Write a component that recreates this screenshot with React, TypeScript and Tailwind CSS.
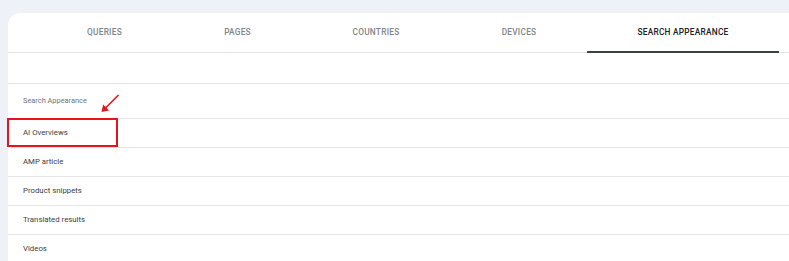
import React from "react";

const tabs = [
  { label: "QUERIES", w: "w-[139px]" },
  { label: "PAGES", w: "w-[127px]" },
  { label: "COUNTRIES", w: "w-[150px]" },
  { label: "DEVICES", w: "w-[136px]" },
  { label: "SEARCH APPEARANCE", w: "w-[192px]", active: true },
];

const rows = ["AI Overviews", "AMP article", "Product snippets", "Translated results", "Videos"];

const App = () => {
  return (
    <div className="relative w-[789px] h-[261px] overflow-hidden bg-[#eef2f8] pl-2 pt-[13px] font-['Roboto','Liberation_Sans',sans-serif]">
      <div className="bg-white rounded-tl-[12px] h-full">
        {/* tabs */}
        <div className="flex h-[40px] border-b border-[#e6e6e6] pl-[27px]">
          {tabs.map((t) => (
            <div
              key={t.label}
              className={`${t.w} relative flex items-center justify-center text-[8.3px] font-medium tracking-[0.03em] ${
                t.active ? "text-[#202124]" : "text-[#80868b]"
              }`}
            >
              <span className="-mt-[1px]">{t.label}</span>
              {t.active ? (
                <div className="absolute left-0 right-0 -bottom-[1px] h-[2px] bg-[#3c4043]" />
              ) : null}
            </div>
          ))}
        </div>
        <div className="h-[31px] border-b border-[#e6e6e6]" />
        <div className="h-[35px] border-b border-[#e6e6e6] flex items-center pl-[15px] text-[7.4px] text-[#70757a]">
          Search Appearance
        </div>
        {rows.map((r) => (
          <div
            key={r}
            className="h-[29px] border-b border-[#e6e6e6] flex items-center pl-[15px] text-[7.8px] text-[#3c4043]"
          >
            {r}
          </div>
        ))}
      </div>

      {/* annotation */}
      <div className="absolute left-[7px] top-[118px] w-[111px] h-[29px] border-2 border-[#e8141b]" />
      <svg className="absolute left-0 top-0" width="789" height="261">
        <line x1="118.5" y1="95" x2="105" y2="108.5" stroke="#e8141b" strokeWidth="1.6" />
        <polygon points="101.5,112 103.2,104.6 109,110.4" fill="#e8141b" />
      </svg>
    </div>
  );
};

export default App;
